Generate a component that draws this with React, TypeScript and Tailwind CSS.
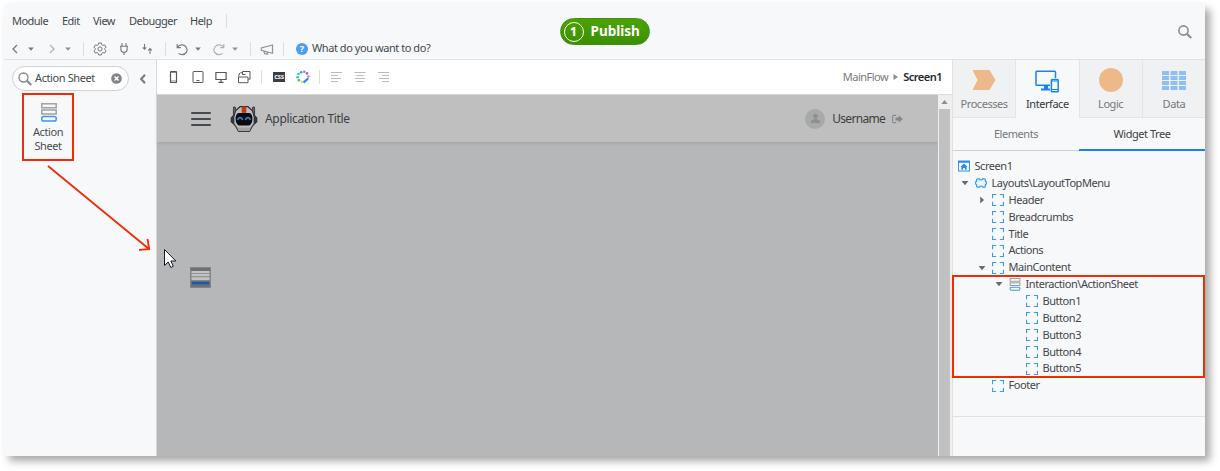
import React from "react";

const Sep = ({ className = "" }: { className?: string }) => (
  <span className={`h-3.5 w-px shrink-0 bg-[#dcdee1] ${className}`} />
);

const Ico = ({ className = "", children, sw = 1 }: { className?: string; children: React.ReactNode; sw?: number }) => (
  <svg viewBox="0 0 16 16" fill="none" stroke="currentColor" strokeWidth={sw} className={`h-4 w-4 shrink-0 ${className}`}>
    {children}
  </svg>
);

const Caret = ({ className = "" }: { className?: string }) => (
  <Ico className={className}>
    <path d="M5.2 6.600h5.600L8 9.800z" fill="currentColor" stroke="none" />
  </Ico>
);

const SheetIcon = ({ className = "" }: { className?: string }) => (
  <svg viewBox="0 0 16 19" fill="none" className={className}>
    <rect x="0.8" y="0.8" width="14.400" height="4" stroke="#9b9b9b" strokeWidth="1.400" />
    <rect x="0.8" y="7" width="14.400" height="4" stroke="#9b9b9b" strokeWidth="1.400" />
    <rect x="0.8" y="13.400" width="14.400" height="4.600" rx="1.800" stroke="#3f94ec" strokeWidth="1.500" />
  </svg>
);

const BoxIcon = () => (
  <svg viewBox="0 0 12 12" fill="none" stroke="#4298ee" strokeWidth="1.1" className="h-3 w-3 shrink-0">
    <path d="M.55 4.200V.55H4.200M7.800.55h3.650V4.200M11.450 7.800v3.650H7.800M4.200 11.450H.55V7.800" />
  </svg>
);

const ScreenIcon = () => (
  <svg viewBox="0 0 12 12" className="h-3 w-3 shrink-0">
    <rect x=".6" y="1.2" width="10.8" height="9.8" fill="#fff" stroke="#2b8bea" strokeWidth="1" />
    <path d="M.1.7h11.8v2H.1zM6 3.400l3.600 3.400H8.700v3H6.900V8H5.100v1.800H3.300v-3h-.9z" fill="#2b8bea" />
  </svg>
);

const BlockIcon = () => (
  <svg viewBox="0 0 12 12" fill="#e9f3fd" stroke="#4298ee" strokeWidth="1.200" className="h-3 w-3 shrink-0">
    <path d="M2.600 1.800h1.800c.3 1.500 2.900 1.500 3.200 0h1.800q1 0 1 1v1.400c1.400.4 1.400 3.200 0 3.600v1.400q0 1-1 1H7.600c-.3-1.500-2.900-1.500-3.200 0H2.600q-1 0-1-1V7.800c-1.400-.4-1.400-3.200 0-3.600V2.800q0-1 1-1z" />
  </svg>
);

type Node = { label: string; pad: string; icon: "screen" | "block" | "box" | "sheet"; state?: "open" | "closed" };

const tree: Node[] = [
  { label: "Screen1", pad: "pl-0", icon: "screen" },
  { label: "Layouts\\LayoutTopMenu", pad: "pl-[17px]", icon: "block", state: "open" },
  { label: "Header", pad: "pl-[34px]", icon: "box", state: "closed" },
  { label: "Breadcrumbs", pad: "pl-[34px]", icon: "box" },
  { label: "Title", pad: "pl-[34px]", icon: "box" },
  { label: "Actions", pad: "pl-[34px]", icon: "box" },
  { label: "MainContent", pad: "pl-[34px]", icon: "box", state: "open" },
  { label: "Interaction\\ActionSheet", pad: "pl-[51px]", icon: "sheet", state: "open" },
  { label: "Button1", pad: "pl-[68px]", icon: "box" },
  { label: "Button2", pad: "pl-[68px]", icon: "box" },
  { label: "Button3", pad: "pl-[68px]", icon: "box" },
  { label: "Button4", pad: "pl-[68px]", icon: "box" },
  { label: "Button5", pad: "pl-[68px]", icon: "box" },
  { label: "Footer", pad: "pl-[34px]", icon: "box" },
];

const TreeRow = ({ node }: { node: Node }) => (
  <div className={`flex h-[16.87px] items-center ${node.pad}`}>
    <span className="-ml-3.5 mr-[3px] flex w-[11px] shrink-0">
      {node.state && (
        <svg viewBox="0 0 8 8" fill="#686b6e" className="h-2 w-2">
          {node.state === "open" ? <path d="M.6 2h6.800L4 6.200z" /> : <path d="M2.200.6v6.800L6 4z" />}
        </svg>
      )}
    </span>
    {node.icon === "screen" && <ScreenIcon />}
    {node.icon === "block" && <BlockIcon />}
    {node.icon === "box" && <BoxIcon />}
    {node.icon === "sheet" && <SheetIcon className="h-[13px] w-3 shrink-0" />}
    <span className="ml-[4.5px] whitespace-nowrap">{node.label}</span>
  </div>
);

const MenuBar = () => (
  <div className="flex h-[34px] items-center pl-2 tracking-[-0.52px] text-[#45484b]">
    <span className="w-[50px]">Module</span>
    <span className="w-[31px]">Edit</span>
    <span className="w-9">View</span>
    <span className="w-[61px]">Debugger</span>
    <span className="w-9">Help</span>
    <Sep />
  </div>
);

const ToolBar = () => (
  <div className="flex h-[21px] items-center pl-[3px] text-[#77797c]">
    <Ico sw={1.3}><path d="M10 4L6 8l4 4" /></Ico>
    <Caret />
    <Ico sw={1.3} className="ml-[5px] text-[#b0b2b4]"><path d="M6 4l4 4-4 4" /></Ico>
    <Caret className="text-[#8f9194]" />
    <Sep className="ml-[7px]" />
    <Ico className="ml-2">
      <path d="M6.7 2h2.6l.5 1.7 1.1.7 1.8-.5 1.3 2.3L12.8 7.500v1l1.200 1.300-1.300 2.300-1.800-.5-1.100.7-.5 1.700H6.700l-.5-1.700-1.100-.7-1.800.5L2 9.800l1.200-1.300v-1L2 6.200l1.300-2.300 1.800.5 1.100-.7z" />
      <circle cx="8" cy="8" r="2.100" />
    </Ico>
    <Ico className="ml-2" sw={1.1}><path d="M6 2v3M10 2v3M4 5.300h8M4.900 5.500v3c0 2 1.300 2.800 3.100 2.800s3.100-.8 3.100-2.800v-3M8 11.300V14" /></Ico>
    <Ico className="ml-[7px]" sw={1.1}><path d="M5.500 3v5M3.700 6.300l1.800 1.800 1.800-1.800M11 13V7.500M9.200 9.300L11 7.500l1.800 1.800" /></Ico>
    <Sep className="ml-[10px]" />
    <Ico className="ml-2" sw={1.2}><path d="M3.200 3v3.600h3.600M3.500 6.300c2-3 6.500-3.200 8.600-.3 2.400 3.600 0 7.600-4 7.600-1.500 0-2.600-.4-3.600-1.200" /></Ico>
    <Caret />
    <Ico className="ml-[5px] text-[#b0b2b4]" sw={1.2}><path d="M12.800 3v3.600H9.200M12.500 6.300c-2-3-6.500-3.200-8.600-.3-2.400 3.600 0 7.600 4 7.600 1.500 0 2.600-.4 3.600-1.200" /></Ico>
    <Caret className="text-[#8f9194]" />
    <Sep className="ml-[7px]" />
    <Ico className="ml-2 text-[#909295]" sw={1.2}><path d="M13.500 4v8.300L2.300 9.300V7l11.200-3zM4.800 10l.8 2.700 3 .3-.7-2.200" /></Ico>
    <Sep className="ml-2" />
    <span className="ml-3 flex h-[12px] w-[12px] shrink-0 items-center justify-center rounded-full bg-[#4a9df0] text-[9px] font-bold leading-none text-white">?</span>
    <span className="ml-[4px] whitespace-nowrap tracking-[-0.44px] text-[#45484b]">What do you want to do?</span>
  </div>
);

const DeviceBar = () => (
  <div className="flex h-[34px] shrink-0 items-center bg-white pl-[9px] pr-[10px] text-[#55585b]">
    <Ico><rect x="4.500" y="2.500" width="6" height="11" rx=".6" strokeWidth="1.200" /><path d="M4.500 12h6M4.500 3.500h6" strokeWidth=".7" /></Ico>
    <Ico className="ml-2"><rect x="3" y="2.500" width="10" height="11" rx=".6" /><path d="M6.500 11.500h3" /></Ico>
    <Ico className="ml-[7px]"><path d="M2.900 3.500h10.200v7H2.900zM8 10.500v3M5.500 13.300h5" strokeWidth="1.200" /></Ico>
    <Ico className="ml-[7px]"><path d="M2.500 8h9.500v5.700H2.500zM2.500 7.500L3.700 4M4.200 3.800H6.500M6.500 6V2.500H14v7.700h-1.600M6 5.500H9.500" /></Ico>
    <Sep className="ml-[9px]" />
    <span className="ml-[11px] flex h-[10px] w-[12px] items-center justify-center bg-[#3a3d43] text-[7px] font-bold leading-none tracking-[-0.3px] text-[#e8e8e8]"><span className="-mt-px">css</span></span>
    <svg viewBox="0 0 14 14" className="ml-[11px] h-[14px] w-[14px]">
      <circle cx="5.200" cy="2.200" r="1.300" fill="#2d9cf0" />
      <circle cx="8.300" cy="1.800" r="1.200" fill="#8d7cf0" />
      <circle cx="11" cy="3.400" r="1.300" fill="#9a62d4" />
      <circle cx="12.400" cy="6.400" r="1.200" fill="#f26b82" />
      <circle cx="2.500" cy="4" r="1.300" fill="#23c2ea" />
      <circle cx="1.600" cy="7.200" r="1.300" fill="#19c9a5" />
      <circle cx="2.800" cy="10.200" r="1.300" fill="#34cd66" />
      <circle cx="5.600" cy="12" r="1.200" fill="#f4d73a" />
      <path d="M7.500 12.600l4.800-4.300" stroke="#2389f2" strokeWidth="2.200" />
    </svg>
    <Sep className="ml-[9px]" />
    <Ico className="ml-2 text-[#b9bbbd]"><path d="M3 3.500h11M3 6.500h7M3 9.500h10M3 12.500h7" /></Ico>
    <Ico className="ml-2 text-[#b9bbbd]"><path d="M2.500 3.500h11M4.500 6.500h7M3 9.500h10M4.500 12.500h7" /></Ico>
    <Ico className="ml-2 text-[#b9bbbd]"><path d="M2 3.500h11M6 6.500h7M3 9.500h10M6 12.500h7" /></Ico>
    <div className="ml-auto flex items-center tracking-[-0.5px]">
      <span className="text-[#77797c]">MainFlow</span>
      <svg viewBox="0 0 5 6" fill="#8b8d90" className="mx-[5px] h-1.5 w-[5px]"><path d="M.5 0v6L5 3z" /></svg>
      <span className="font-semibold text-[#25282b]">Screen1</span>
    </div>
  </div>
);

const Robot = () => (
  <svg viewBox="0 0 28 28" className="h-7 w-7">
    <path d="M3.300 13L3.500 2h1.700L6.500 9zM24.700 13l-.2-11h-1.700L21.500 9z" fill="#6d7073" stroke="#33363a" strokeWidth=".9" />
    <path d="M3.500 10.500l-2.300 2v4.500l2.300 2zM24.500 10.500l2.300 2v4.500l-2.300 2z" fill="#34373b" stroke="#24272a" />
    <path d="M10 1.700h8l4.500 4.100 1.800 6.200v6.500L20.500 24h-13l-3.800-5.500V12l1.800-6.200z" fill="#bdbdbd" stroke="#2d3033" strokeWidth="1.200" />
    <path d="M11.700 1.600h4.600v6.200h-4.600z" fill="#cb350f" />
    <path d="M10 8h8c3.200 0 4.400 2 4.400 5.500 0 4.300-1.600 7-4.400 7h-8c-2.800 0-4.400-2.700-4.400-7C5.600 10 6.800 8 10 8z" fill="#090b10" />
    <path d="M7.800 15.200c.6-3.400 4-3.400 4.700 0M15.500 15.200c.7-3.400 4.100-3.400 4.700 0" fill="none" stroke="#3b73bd" strokeWidth="1.700" />
    <path d="M6.500 22.500l1.700 4h11.600l1.700-4" fill="#a2a3a4" stroke="#3a3d40" strokeWidth="1" />
  </svg>
);

const Canvas = () => (
  <div className="flex min-h-0 flex-1 border-t border-[#dcdcdc]">
    <div className="flex w-[780.5px] flex-col bg-[#b6b7b9]">
      <div className="flex h-[47px] shrink-0 items-center bg-[#bfbfbf] pl-[34px] pr-[34.5px] text-[12px] text-[#3b3e41] shadow-[0_1px_3px_rgba(80,80,90,.22)]">
        <div className="flex w-[20px] flex-col gap-1">
          <i className="h-[2px] rounded-full bg-[#454a50]" />
          <i className="h-[2px] rounded-full bg-[#454a50]" />
          <i className="h-[2px] rounded-full bg-[#454a50]" />
        </div>
        <span className="ml-[19px]"><Robot /></span>
        <span className="ml-[7px] tracking-[-0.33px]">Application Title</span>
        <span className="ml-auto flex h-5 w-5 items-center justify-center rounded-full bg-[#a8a9a9]">
          <svg viewBox="0 0 12 12" fill="#8d8f91" className="h-[11px] w-[11px]"><circle cx="6" cy="3.300" r="2.600" /><path d="M1 10.800V9.200C1 7.600 4 7.500 4.700 6.500h2.600C8 7.500 11 7.600 11 9.200v1.600z" /></svg>
        </span>
        <span className="ml-[7px] tracking-[-0.7px]">Username</span>
        <svg viewBox="0 0 12 10" className="ml-[7px] h-[10px] w-[11px]"><path d="M4.500 1H1.700Q.7 1 .7 2v6q0 1 1 1h2.800" fill="none" stroke="#85888b" strokeWidth="1.200" /><path d="M3.800 3.300h3.400V.8L11.800 5 7.200 9.200V6.700H3.800z" fill="#85888b" /></svg>
      </div>
      <svg viewBox="0 0 21 21" className="ml-[33px] mt-[125px] h-[21px] w-[21px] shrink-0">
        <path d="M0 0h21v21H0z" fill="#858585" />
        <path d="M1 1h19v2.800H1zM1 17.800h19V20H1z" fill="#6f6f6f" />
        <path d="M1.500 4h18v2.200h-18zM1.500 7h18v2.300h-18zM1.500 10.300h18v2.700h-18z" fill="#c2c2c2" />
        <path d="M1.500 14.500h18v3h-18z" fill="#1d58a0" />
      </svg>
    </div>
    <div className="flex flex-1 flex-col items-center bg-[#efefef] pr-[1px]">
      <svg viewBox="0 0 8 5" fill="#8e8e8e" className="mb-[5px] mt-[5px] h-[4px] w-[7px]"><path d="M0 5h8L4 0z" /></svg>
      <div className="w-[11px] flex-1 bg-[#c1c1c1]" />
    </div>
  </div>
);

const Tab = ({ label, active, children }: { label: string; active?: boolean; children: React.ReactNode }) => (
  <div
    className={`flex flex-1 flex-col items-center border-r pt-2 last:border-r-0 ${
      active ? "border-[#e2e4e6] bg-[#f7f8fa] text-[#35383b]" : "border-b border-[#e2e4e6] bg-[#f0f1f2] text-[#75787b]"
    }`}
  >
    <div className="flex h-6 items-center justify-center">{children}</div>
    <span className="mt-1 leading-[15px]">{label}</span>
  </div>
);

const RightPanel = () => (
  <aside className="relative flex w-[253px] shrink-0 flex-col border-l border-[#dfe1e3] tracking-[-0.45px]">
    <div className="flex h-[58px] shrink-0">
      <Tab label="Processes">
        <svg viewBox="0 0 24 20" className="h-5 w-6"><path d="M.5 0h17L23.500 10l-6 10H.5l5-10z" fill="#edb988" /></svg>
      </Tab>
      <Tab label="Interface" active>
        <svg viewBox="0 0 24 24" fill="none" stroke="#1a82ee" strokeWidth="1.500" className="mt-1 h-6 w-6">
          <path d="M20.500 8V2.200q0-.9-.9-.9H1.900q-.9 0-.9.9v12.200q0 .9.9.9H15" />
          <path d="M9 15.500h4v3h2v2H6v-2h3z" fill="#1a82ee" stroke="none" />
          <rect x="16.400" y="9.500" width="6.800" height="12.300" rx=".8" />
          <path d="M16.400 11h6.800M16.400 19.500h6.800" strokeWidth="1" />
        </svg>
      </Tab>
      <Tab label="Logic">
        <span className="h-6 w-6 rounded-full bg-[#edb988]" />
      </Tab>
      <Tab label="Data">
        <svg viewBox="0 0 24 19" className="h-[19px] w-6" fill="#8cbff3">
          {[0, 5, 10, 15].map((y) => (
            <path key={y} d={`M0 ${y}h7v4H0zM8.500 ${y}h7v4h-7zM17 ${y}h7v4h-7z`} />
          ))}
        </svg>
      </Tab>
    </div>
    <div className="flex h-[33px] shrink-0 text-center leading-[31px]">
      <span className="flex-1 border-b border-[#cfd1d4] text-[#75787b]">Elements</span>
      <span className="flex-1 border-b-2 border-[#1a80ee] text-[#3d4043]">Widget Tree</span>
    </div>
    <div className="h-[266px] shrink-0 border-b border-[#dfe1e3] pl-[5px] pt-[7px] text-[#434649]">
      {tree.map((n) => (
        <TreeRow key={n.label} node={n} />
      ))}
    </div>
    <div className="absolute -left-px top-[215px] h-[103px] w-[253px] border-2 border-[#ee2c05]" />
  </aside>
);

const Toolbox = () => (
  <aside className="relative flex w-[153px] shrink-0 flex-col border-r border-[#d5d7d9] tracking-[-0.4px]">
    <div className="flex items-center pl-2 pt-[6px]">
      <div className="flex h-[25px] w-[117px] items-center rounded-full border border-[#cfd1d4] bg-white pl-[5px] text-[#45484b]">
        <svg viewBox="0 0 14 14" fill="none" stroke="#85878b" className="h-[14px] w-[14px] shrink-0"><circle cx="5.500" cy="5.500" r="4.500" strokeWidth="1.400" /><path d="M8.800 8.800l4.400 4.200" strokeWidth="2.200" /></svg>
        <span className="ml-[3px] w-[75.5px] whitespace-nowrap">Action Sheet</span>
        <svg viewBox="0 0 11 11" className="h-[11px] w-[11px] shrink-0"><circle cx="5.500" cy="5.500" r="5.300" fill="#808285" /><path d="M3.500 3.500l4 4M7.500 3.500l-4 4" stroke="#fff" strokeWidth="1.500" /></svg>
      </div>
      <Ico sw={2.2} className="ml-[6px] text-[#7d7f83]"><path d="M10 3.800L6.200 8l3.800 4.200" /></Ico>
    </div>
    <div className="ml-[18px] mt-[2px] flex h-[68px] w-[52px] flex-col items-center border-2 border-[#ee2c05] pt-2 text-center leading-[13.5px] text-[#4a4d50]">
      <SheetIcon className="ml-px h-[19px] w-4" />
      <span className="mt-[3px]">Action<br />Sheet</span>
    </div>
    <svg viewBox="0 0 110 95" fill="none" stroke="#ee2c05" strokeWidth="1.8" className="absolute left-[41px] top-[103px] h-[95px] w-[110px]">
      <path d="M3 3l101 83M102.500 76l1.700 10.200-10.200.6" />
    </svg>
    <svg viewBox="0 0 14 22" className="absolute left-[159px] top-[188px] z-10 h-[22px] w-[14px]">
      <path d="M1.500 1.500v16l3.700-3.500 2.600 5.500 2.500-1.200L7.800 13h5z" fill="#fff" stroke="#15172b" strokeWidth="1" />
    </svg>
  </aside>
);

export default function App() {
  return (
    <div className="h-[471px] w-[1220px] overflow-hidden bg-white pl-1 pt-1 font-['Noto_Sans','Open_Sans',sans-serif] text-[11px]">
      <div className="flex h-[452px] w-[1201px] flex-col bg-[#f7f8fa] shadow-[5px_5px_8px_rgba(0,0,0,.35)]">
        <header className="flex h-14 shrink-0 items-start border-b border-[#dfe1e3]">
          <div className="w-[556px]">
            <MenuBar />
            <ToolBar />
          </div>
          <button className="mt-[14px] flex h-[27px] w-[90px] items-center rounded-full border border-[#43920f] bg-linear-to-b from-[#4aa304] to-[#3c9000] pl-[2.5px] text-[13.5px] font-bold text-white">
            <span className="flex h-[20px] w-[20px] items-center justify-center rounded-full border-[1.5px] border-white text-[13px] leading-none">1</span>
            <span className="ml-[7px]">Publish</span>
          </button>
          <svg viewBox="0 0 14 14" fill="none" stroke="#8b8d90" className="ml-auto mr-[13px] mt-[21px] h-[14px] w-[14px]"><circle cx="5.500" cy="5.500" r="4.600" strokeWidth="1.600" /><path d="M8.800 8.800l4.400 4.200" strokeWidth="2.200" /></svg>
        </header>
        <div className="flex min-h-0 flex-1">
          <Toolbox />
          <main className="flex min-w-0 flex-1 flex-col">
            <DeviceBar />
            <Canvas />
          </main>
          <RightPanel />
        </div>
      </div>
    </div>
  );
}
